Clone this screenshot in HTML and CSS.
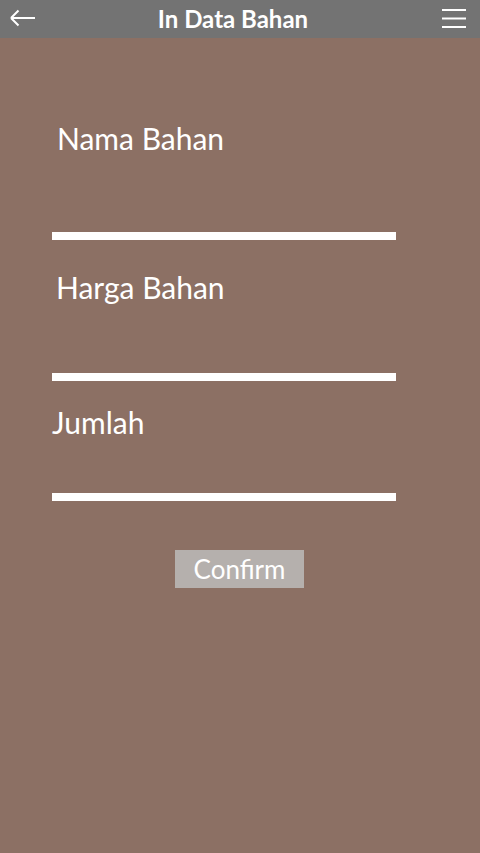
FILE: index.html
```html
<!DOCTYPE html>
<html>
<head>
<meta charset="utf-8">
<link rel="stylesheet" href="styles.css">
</head>
<body>
<header class="topbar">
  <svg class="icon back" width="30" height="24" viewBox="0 0 30 24"><path d="M3 12H27M3 12L10.5 4.5M3 12L10.5 19.5" fill="none" stroke="#fff" stroke-width="2"/></svg>
  <h1 class="title">In Data Bahan</h1>
  <svg class="icon menu" width="26" height="24" viewBox="0 0 26 24"><path d="M1 4H25M1 12.5H25M1 21H25" fill="none" stroke="#fff" stroke-width="2"/></svg>
</header>
<main class="form">
  <div class="field f1">
    <label class="label l1">Nama Bahan</label>
    <div class="line"></div>
  </div>
  <div class="field f2">
    <label class="label l2">Harga Bahan</label>
    <div class="line"></div>
  </div>
  <div class="field f3">
    <label class="label l3">Jumlah</label>
    <div class="line"></div>
  </div>
  <div class="actions">
    <button class="confirm">Confirm</button>
  </div>
</main>
</body>
</html>
```
FILE: styles.css
```css
html, body {
  margin: 0;
  padding: 0;
  height: 100%;
}
body {
  background: #8c7064;
  font-family: Lato, "Open Sans", sans-serif;
  color: #fff;
}
.topbar {
  height: 38px;
  background: #737373;
  display: flex;
  align-items: center;
  padding: 0 13px 0 8px;
}
.icon { display: block; flex: none; }
.back { margin-top: -2px; }
.menu { margin-top: -2px; }
.title {
  flex: 1;
  margin: 0;
  font-size: 24px;
  font-weight: 700;
  line-height: 38px;
  text-align: center;
  padding-right: 13px;
}
.form {
  display: flex;
  flex-direction: column;
  padding: 0 84px 0 52px;
}
.field {
  display: flex;
  flex-direction: column;
}
.label {
  font-size: 30px;
  line-height: 36px;
}
.line {
  height: 8px;
  background: #fff;
}
.f1 { padding-top: 82px; }
.l1 { padding-left: 5px; margin-bottom: 76px; }
.f2 { padding-top: 29px; }
.l2 { padding-left: 4px; margin-bottom: 68px; }
.f3 { padding-top: 23px; }
.l3 { margin-bottom: 53px; }
.actions {
  display: flex;
  justify-content: center;
  padding-top: 49px;
  padding-left: 31px;
}
.confirm {
  width: 129px;
  height: 38px;
  background: #b5b0ad;
  border: none;
  color: #fff;
  font-family: Lato, "Open Sans", sans-serif;
  font-size: 26px;
  padding: 0;
}
```
